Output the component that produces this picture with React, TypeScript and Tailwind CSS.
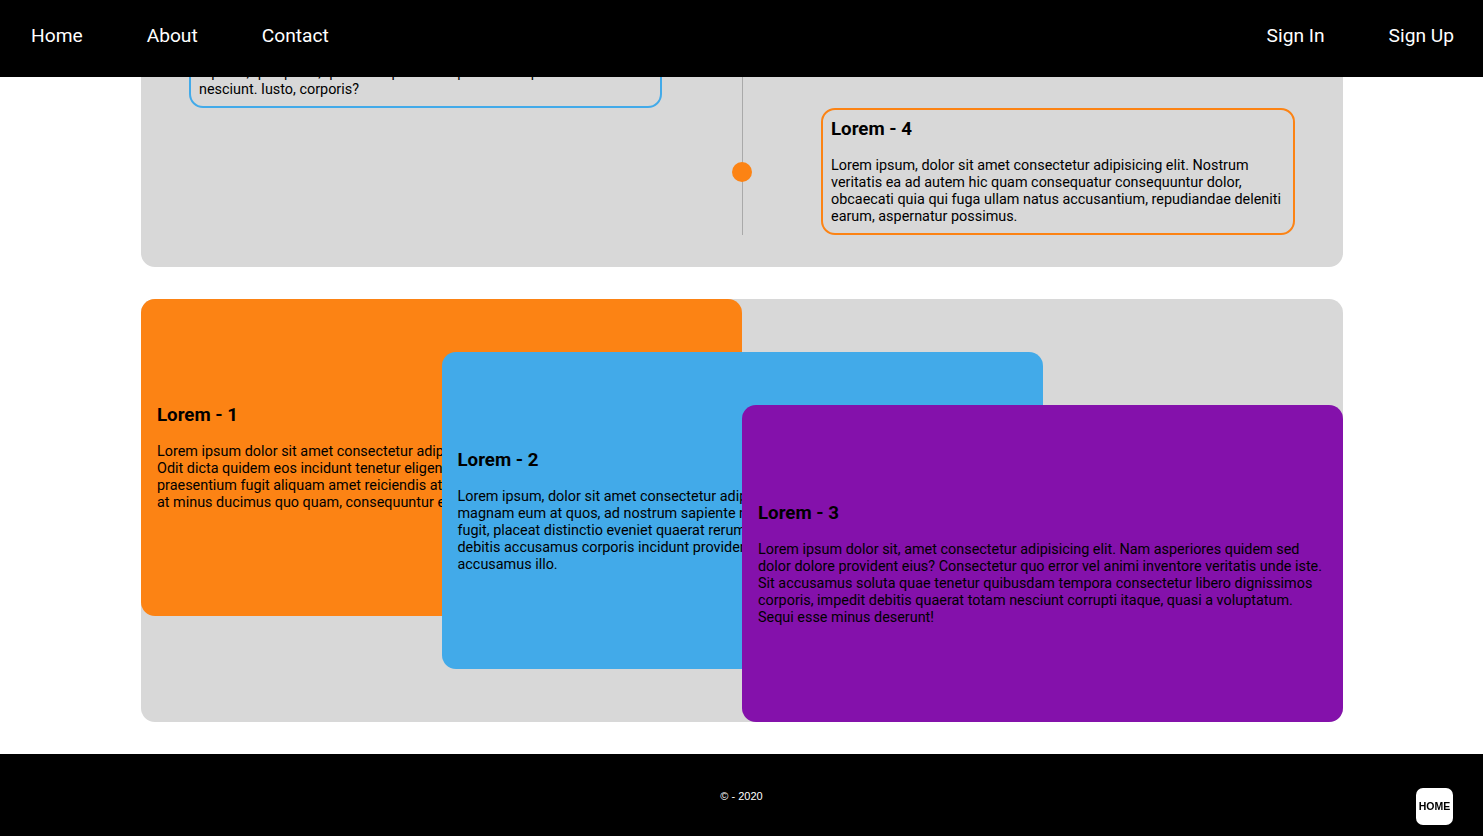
import React from "react";

interface TimelineItem {
  id: string;
  title: string;
  side: "left" | "right";
  border: string;
  dot: string;
  lines: string[];
}

const timeline: TimelineItem[] = [
  {
    id: "3",
    title: "Lorem - 3",
    side: "left",
    border: "border-[#42aae9]",
    dot: "bg-[#42aae9]",
    lines: [
      "Lorem ipsum dolor sit amet consectetur adipisicing elit. Totam ab",
      "dolorem, quibusdam repellendus qui aperiam, ipsa sequi optio",
      "repellat, quia porro, quaerat explicabo aspernatur impedit",
      "nesciunt. Iusto, corporis?",
    ],
  },
  {
    id: "4",
    title: "Lorem - 4",
    side: "right",
    border: "border-[#fc8314]",
    dot: "bg-[#fc8314]",
    lines: [
      "Lorem ipsum, dolor sit amet consectetur adipisicing elit. Nostrum",
      "veritatis ea ad autem hic quam consequatur consequuntur dolor,",
      "obcaecati quia qui fuga ullam natus accusantium, repudiandae deleniti",
      "earum, aspernatur possimus.",
    ],
  },
];

interface StackCard {
  id: string;
  title: string;
  className: string;
  lines: string[];
}

const stackCards: StackCard[] = [
  {
    id: "1",
    title: "Lorem - 1",
    className: "bg-[#fc8314] col-start-1 col-span-2 row-start-1 row-span-3",
    lines: [
      "Lorem ipsum dolor sit amet consectetur adipisicing elit. Sint, nihil.",
      "Odit dicta quidem eos incidunt tenetur eligendi, ratione nobis",
      "praesentium fugit aliquam amet reiciendis at laborum dolor maxime,",
      "at minus ducimus quo quam, consequuntur eius.",
    ],
  },
  {
    id: "2",
    title: "Lorem - 2",
    className: "bg-[#42aae9] col-start-2 col-span-2 row-start-2 row-span-3",
    lines: [
      "Lorem ipsum, dolor sit amet consectetur adipisicing elit. Quas,",
      "magnam eum at quos, ad nostrum sapiente nihil tempora ipsa",
      "fugit, placeat distinctio eveniet quaerat rerum officiis dolore",
      "debitis accusamus corporis incidunt provident, voluptates ad",
      "accusamus illo.",
    ],
  },
  {
    id: "3",
    title: "Lorem - 3",
    className: "bg-[#8411ab] col-start-3 col-span-2 row-start-3 row-span-3",
    lines: [
      "Lorem ipsum dolor sit, amet consectetur adipisicing elit. Nam asperiores quidem sed",
      "dolor dolore provident eius? Consectetur quo error vel animi inventore veritatis unde iste.",
      "Sit accusamus soluta quae tenetur quibusdam tempora consectetur libero dignissimos",
      "corporis, impedit debitis quaerat totam nesciunt corrupti itaque, quasi a voluptatum.",
      "Sequi esse minus deserunt!",
    ],
  },
];

function Lines({ lines }: { lines: string[] }) {
  return (
    <p className="text-[14.4px] leading-[17px] text-black">
      {lines.map((line, i) => (
        <span key={i} className="block whitespace-nowrap">
          {line}
        </span>
      ))}
    </p>
  );
}

function CardTitle({ children }: { children: React.ReactNode }) {
  return (
    <h3 className="text-[18.72px] leading-[22px] font-bold mb-[17px] text-black">
      {children}
    </h3>
  );
}

export default function App() {
  return (
    <div
      className="min-h-screen bg-white"
      style={{ fontFamily: "Roboto, 'Liberation Sans', sans-serif" }}
    >
      {/* Navbar */}
      <header className="h-[77px] bg-black flex items-center justify-between pb-[5px] pl-[31px] pr-[29px]">
        <nav className="flex items-center gap-[64px] text-white text-[19.2px]">
          <a href="#">Home</a>
          <a href="#">About</a>
          <a href="#">Contact</a>
        </nav>
        <nav className="flex items-center gap-[64px] text-white text-[19.2px]">
          <a href="#">Sign In</a>
          <a href="#">Sign Up</a>
        </nav>
      </header>

      <main className="pl-[141px] pr-[140px]">
        {/* Timeline (scrolled, top part hidden) */}
        <div className="h-[190px] overflow-hidden flex flex-col justify-end">
          <section className="bg-[#d8d8d8] rounded-[14px] py-8 shrink-0">
            {timeline.map((item) => (
              <div key={item.id} className="relative grid grid-cols-2">
                <div className="pl-12 pr-20">
                  {item.side === "left" && (
                    <div className={`border-2 ${item.border} rounded-[14px] p-2`}>
                      <CardTitle>{item.title}</CardTitle>
                      <Lines lines={item.lines} />
                    </div>
                  )}
                </div>
                <div className="border-l border-[#a9a9a9] pl-[78px] pr-12">
                  {item.side === "right" && (
                    <div className={`border-2 ${item.border} rounded-[14px] p-2`}>
                      <CardTitle>{item.title}</CardTitle>
                      <Lines lines={item.lines} />
                    </div>
                  )}
                </div>
                <span
                  className={`absolute left-1/2 top-1/2 -translate-x-1/2 -translate-y-1/2 w-5 h-5 rounded-full ${item.dot}`}
                />
              </div>
            ))}
          </section>
        </div>

        {/* Stacked cards */}
        <section className="mt-8 mb-8 bg-[#d8d8d8] rounded-[14px] grid grid-cols-4 grid-rows-[53px_53px_211px_53px_53px]">
          {stackCards.map((card) => (
            <div
              key={card.id}
              className={`${card.className} rounded-[14px] px-4 flex flex-col justify-center overflow-hidden`}
            >
              <CardTitle>{card.title}</CardTitle>
              <Lines lines={card.lines} />
            </div>
          ))}
        </section>
      </main>

      {/* Footer */}
      <footer className="h-[82px] bg-black flex items-center justify-center">
        <p
          className="text-white text-[11px] pt-[2px]"
          style={{ fontFamily: "'Liberation Sans', Arial, sans-serif" }}
        >
          © - 2020
        </p>
      </footer>

      <a
        href="#"
        className="fixed bottom-[11px] right-[30px] w-[37px] h-[37px] rounded-[7px] bg-white text-black text-[10.5px] font-bold flex items-center justify-center"
        style={{ fontFamily: "'Liberation Sans', Arial, sans-serif" }}
      >
        HOME
      </a>
    </div>
  );
}
